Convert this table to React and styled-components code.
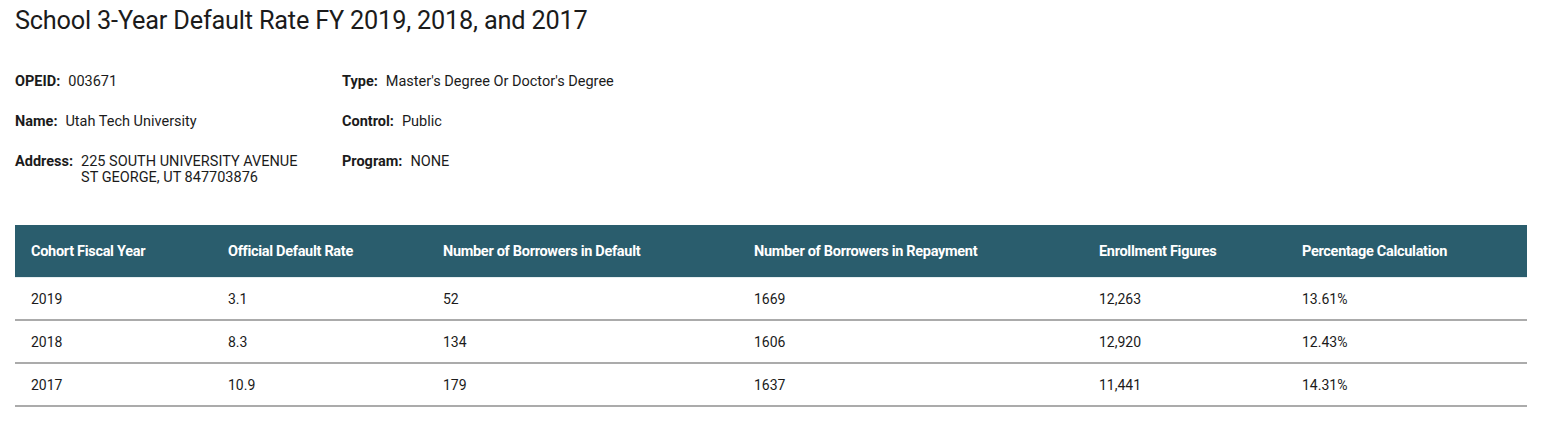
import React from "react"
import styled, { createGlobalStyle } from "styled-components"

const GlobalStyle = createGlobalStyle`
  body {
    margin: 0;
    background: #fff;
    font-family: Roboto, "Liberation Sans", sans-serif;
    color: #1b1b1b;
  }
`

const info = [
  [
    { label: "OPEID:", value: ["003671"] },
    { label: "Name:", value: ["Utah Tech University"] },
    {
      label: "Address:",
      value: ["225 SOUTH UNIVERSITY AVENUE", "ST GEORGE, UT 847703876"],
    },
  ],
  [
    { label: "Type:", value: ["Master's Degree Or Doctor's Degree"] },
    { label: "Control:", value: ["Public"] },
    { label: "Program:", value: ["NONE"] },
  ],
]

const columns = [
  { title: "Cohort Fiscal Year", width: 197 },
  { title: "Official Default Rate", width: 215 },
  { title: "Number of Borrowers in Default", width: 311 },
  { title: "Number of Borrowers in Repayment", width: 345 },
  { title: "Enrollment Figures", width: 203 },
  { title: "Percentage Calculation", width: 241 },
]

const rows = [
  ["2019", "3.1", "52", "1669", "12,263", "13.61%"],
  ["2018", "8.3", "134", "1606", "12,920", "12.43%"],
  ["2017", "10.9", "179", "1637", "11,441", "14.31%"],
]

export default function App() {
  return (
    <Page>
      <GlobalStyle />
      <Title>School 3-Year Default Rate FY 2019, 2018, and 2017</Title>
      <InfoGrid>
        {info.map((col, i) => (
          <InfoColumn key={i} $width={i === 0 ? 327 : 400}>
            {col.map((item) => (
              <InfoRow key={item.label}>
                <Label>{item.label}</Label>
                <Value>
                  {item.value.map((line) => (
                    <div key={line}>{line}</div>
                  ))}
                </Value>
              </InfoRow>
            ))}
          </InfoColumn>
        ))}
      </InfoGrid>
      <Table>
        <colgroup>
          {columns.map((c) => (
            <col key={c.title} style={{ width: c.width }} />
          ))}
        </colgroup>
        <thead>
          <tr>
            {columns.map((c) => (
              <Th key={c.title}>{c.title}</Th>
            ))}
          </tr>
        </thead>
        <tbody>
          {rows.map((r) => (
            <tr key={r[0]}>
              {r.map((cell, j) => (
                <Td key={j}>{cell}</Td>
              ))}
            </tr>
          ))}
        </tbody>
      </Table>
    </Page>
  )
}

const Page = styled.div`
  padding: 5px 15px 0 15px;
  width: 1512px;
`

const Title = styled.h1`
  margin: 0;
  font-size: 25.3px;
  font-weight: 400;
  line-height: 32px;
  color: #1b1b1b;
  letter-spacing: -0.2px;
`

const InfoGrid = styled.div`
  display: flex;
  margin-top: 37px;
`

const InfoColumn = styled.div`
  width: ${(p) => p.$width}px;
  display: flex;
  flex-direction: column;
  gap: 24px;
`

const InfoRow = styled.div`
  display: flex;
  gap: 8px;
  font-size: 14.5px;
  line-height: 16px;
`

const Label = styled.span`
  font-weight: 700;
`

const Value = styled.div`
  font-weight: 400;
`

const Table = styled.table`
  margin-top: 39px;
  border-collapse: collapse;
  table-layout: fixed;
  width: 1512px;
  font-size: 14px;
`

const Th = styled.th`
  background: #2a5d6d;
  color: #fff;
  text-align: left;
  font-weight: 700;
  font-size: 14.5px;
  height: 52px;
  padding: 0 16px;
  letter-spacing: -0.3px;
  border-bottom: 1px solid #e6eef0;
`

const Td = styled.td`
  height: 41px;
  padding: 0 16px;
  border-bottom: 2px solid #ababab;
  color: #1b1b1b;
`
